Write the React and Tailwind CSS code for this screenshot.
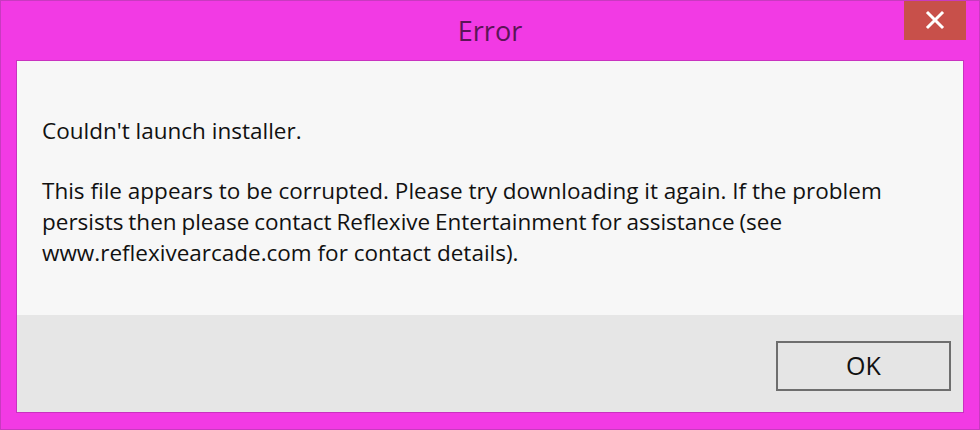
export default function App() {
  return (
    <div
      className="w-[980px] h-[430px] bg-[#f23ae4] border border-[#c83ac0] flex flex-col overflow-hidden"
      style={{ fontFamily: '"Open Sans", "Noto Sans", sans-serif' }}
    >
      <div className="h-[59px] shrink-0 grid grid-cols-[1fr_auto_1fr] items-start px-[13px]">
        <div />
        <div className="pt-[12px] text-[27px] leading-[36px] text-[#5b1556]">Error</div>
        <div className="flex justify-end">
          <div className="w-[62px] h-[40px] bg-[#c8504a] flex items-center justify-center -mt-px">
            <svg width="20" height="20" viewBox="0 0 20 20">
              <path d="M3 3 L17 17 M17 3 L3 17" stroke="#ffffff" strokeWidth="3" strokeLinecap="square" />
            </svg>
          </div>
        </div>
      </div>
      <div className="mx-[15px] border border-[#c932c0] flex flex-col">
        <div className="h-[254px] bg-[#f7f7f7] pt-[54px] pl-[25px] pr-[10px] text-[22.5px] leading-[31px] text-[#111111] whitespace-nowrap">
          <p>Couldn't launch installer.</p>
          <p className="mt-[29px]">
            This file appears to be corrupted. Please try downloading it again. If the problem
            <br />
            <span className="[word-spacing:-1px]">
              persists then please contact Reflexive Entertainment for assistance (see
            </span>
            <br />
            www.reflexivearcade.com for contact details).
          </p>
        </div>
        <div className="h-[97px] bg-[#e6e6e6] flex items-start justify-end pt-[26px] pr-[12px]">
          <button className="w-[175px] h-[50px] bg-[#e5e5e5] border-2 border-[#6e6e6e] text-[25px] text-[#111111] flex items-center justify-center">
            OK
          </button>
        </div>
      </div>
    </div>
  );
}
